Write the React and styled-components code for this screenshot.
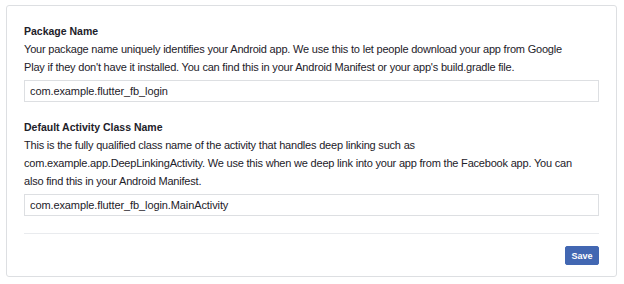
import React from "react";
import styled, { createGlobalStyle } from "styled-components";

const Global = createGlobalStyle`
  html, body { margin: 0; padding: 0; background: #ffffff; }
  body { font-family: "Liberation Sans", Arial, sans-serif; color: #1d2129; }
  * { box-sizing: border-box; }
`;

const Page = styled.div`
  padding: 5px 7px 0 6px;
`;

const Card = styled.div`
  width: 611px;
  height: 272px;
  border: 1px solid #dddfe2;
  border-radius: 3px;
  background: #fff;
  padding: 16px 17px 0 17px;
  display: flex;
  flex-direction: column;
`;

const Section = styled.div`
  display: flex;
  flex-direction: column;
  margin-bottom: ${(p) => p.$mb || 0}px;
`;

const Label = styled.div`
  font-size: 10.5px;
  font-weight: bold;
  line-height: 18px;
  color: #1d2129;
`;

const Description = styled.div`
  font-size: 11px;
  letter-spacing: -0.2px;
  line-height: 18px;
  color: #1d2129;
  white-space: nowrap;
`;

const Input = styled.input`
  margin-top: 4px;
  height: 22px;
  width: 100%;
  border: 1px solid #dddfe2;
  border-radius: 0;
  padding: 0 5px;
  font-family: "Liberation Sans", Arial, sans-serif;
  font-size: 11px;
  letter-spacing: -0.1px;
  color: #1d2129;
  background: #fff;
  outline: none;
`;

const Divider = styled.div`
  margin-top: 17px;
  border-top: 1px solid #e9ebee;
`;

const Footer = styled.div`
  display: flex;
  justify-content: flex-end;
  padding-top: 12px;
`;

const SaveButton = styled.button`
  height: 19px;
  width: 34px;
  padding: 0;
  border: 1px solid #4267b2;
  border-radius: 2px;
  background: #4267b2;
  color: #fff;
  font-family: "Liberation Sans", Arial, sans-serif;
  font-size: 9px;
  font-weight: bold;
  cursor: pointer;
`;

export default function App() {
  return (
    <>
      <Global />
      <Page>
        <Card>
          <Section $mb={16}>
            <Label>Package Name</Label>
            <Description>
              Your package name uniquely identifies your Android app. We use this to let people download your app from Google
              <br />
              Play if they don't have it installed. You can find this in your Android Manifest or your app's build.gradle file.
            </Description>
            <Input defaultValue="com.example.flutter_fb_login" />
          </Section>
          <Section>
            <Label>Default Activity Class Name</Label>
            <Description>
              This is the fully qualified class name of the activity that handles deep linking such as
              <br />
              com.example.app.DeepLinkingActivity. We use this when we deep link into your app from the Facebook app. You can
              <br />
              also find this in your Android Manifest.
            </Description>
            <Input defaultValue="com.example.flutter_fb_login.MainActivity" />
          </Section>
          <Divider />
          <Footer>
            <SaveButton>Save</SaveButton>
          </Footer>
        </Card>
      </Page>
    </>
  );
}
